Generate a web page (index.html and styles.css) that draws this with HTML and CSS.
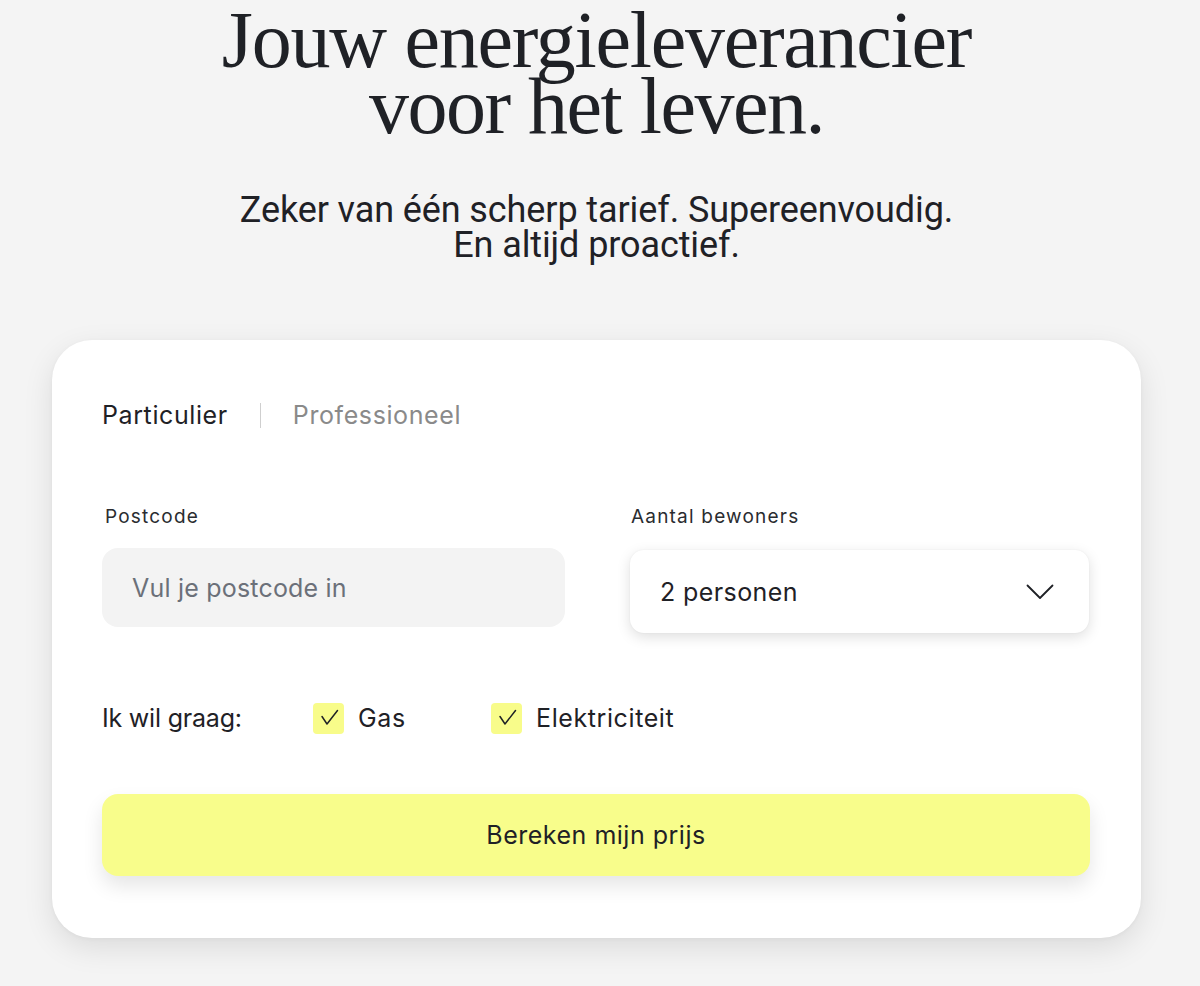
FILE: index.html
```html
<!DOCTYPE html>
<html lang="nl">
<head>
<meta charset="utf-8">
<title>Jouw energieleverancier voor het leven</title>
<link rel="stylesheet" href="styles.css">
</head>
<body>
<main class="page">
  <section class="hero">
    <h1 class="hero-title"><span class="l1">Jouw energieleverancier</span><br><span class="l2">voor het leven.</span></h1>
    <p class="hero-sub">Zeker van één scherp tarief. Supereenvoudig.<br>En altijd proactief.</p>
  </section>

  <section class="card">
    <div class="tabs">
      <span class="tab tab-active">Particulier</span>
      <span class="tab-sep"></span>
      <span class="tab">Professioneel</span>
    </div>

    <div class="fields">
      <div class="field">
        <label class="field-label">Postcode</label>
        <div class="input">Vul je postcode in</div>
      </div>
      <div class="field">
        <label class="field-label field-label-right">Aantal bewoners</label>
        <div class="select">
          <span>2 personen</span>
          <svg class="chevron" width="28" height="16" viewBox="0 0 28 16" fill="none"><path d="M1.5 1.5 L14 14 L26.5 1.5" stroke="#1f2126" stroke-width="1.8" stroke-linecap="round" stroke-linejoin="round"/></svg>
        </div>
      </div>
    </div>

    <div class="checks">
      <span class="checks-label">Ik wil graag:</span>
      <span class="check check-gas">
        <span class="box"><svg width="31" height="31" viewBox="0 0 31 31" fill="none"><path d="M9 13.5 L14 21 L24.5 7.5" stroke="#1f2126" stroke-width="1.5" stroke-linecap="round" stroke-linejoin="round"/></svg></span>
        <span class="check-text">Gas</span>
      </span>
      <span class="check">
        <span class="box"><svg width="31" height="31" viewBox="0 0 31 31" fill="none"><path d="M9 13.5 L14 21 L24.5 7.5" stroke="#1f2126" stroke-width="1.5" stroke-linecap="round" stroke-linejoin="round"/></svg></span>
        <span class="check-text">Elektriciteit</span>
      </span>
    </div>

    <button class="cta">Bereken mijn prijs</button>
  </section>
</main>
</body>
</html>
```

FILE: styles.css
```css
* { box-sizing: border-box; }
html, body { margin: 0; padding: 0; }
body {
  background: #f4f4f4;
  color: #1f2126;
  font-family: "Inter", "Liberation Sans", sans-serif;
  height: 986px;
  overflow: hidden;
}
.page {
  width: 1089px;
  margin-left: 52px;
  padding-top: 7px;
}
.hero { text-align: center; }
.hero-title {
  margin: 0;
  font-family: "Liberation Serif", serif;
  font-weight: 400;
  font-size: 80px;
  line-height: 66px;
  color: #1f2126;
}
.hero-title .l1 { letter-spacing: -1.25px; }
.hero-title .l2 { letter-spacing: -1.5px; }
.hero-sub {
  margin: 54px 0 0;
  font-family: "Roboto", "Liberation Sans", sans-serif;
  font-size: 36px;
  line-height: 35px;
  letter-spacing: -0.1px;
  color: #1f2126;
}
.card {
  margin-top: 77px;
  background: #fff;
  border-radius: 40px;
  box-shadow: 0 10px 30px rgba(0,0,0,0.10), 0 1px 4px rgba(0,0,0,0.04);
  padding: 60px 52px 62px 50px;
}
.tabs {
  display: flex;
  align-items: center;
  height: 30px;
}
.tab {
  font-size: 25px;
  line-height: 30px;
  color: #8a8a8a;
  letter-spacing: 0.6px;
}
.tab-active { color: #1f2126; }
.tab-sep {
  width: 1px;
  height: 25px;
  background: #cfcfcf;
  margin: 0 32px;
}
.fields {
  margin-top: 76px;
  display: grid;
  grid-template-columns: 463px 459px;
  column-gap: 65px;
}
.field { display: flex; flex-direction: column; }
.field-label {
  font-size: 19px;
  line-height: 22px;
  color: #2a2c30;
  padding-left: 3px;
  letter-spacing: 1.2px;
}
.field-label-right { padding-left: 1px; }
.input {
  margin-top: 20px;
  height: 79px;
  background: #f3f3f3;
  border-radius: 16px;
  padding-left: 30px;
  display: flex;
  align-items: center;
  font-size: 25px;
  letter-spacing: 0.2px;
  color: #6b7079;
}
.select {
  margin-top: 22px;
  height: 83px;
  background: #fff;
  border-radius: 14px;
  box-shadow: 0 4px 14px rgba(0,0,0,0.13), 0 0 2px rgba(0,0,0,0.06);
  padding: 0 35px 0 30px;
  display: flex;
  align-items: center;
  justify-content: space-between;
  font-size: 25px;
  letter-spacing: 0.4px;
  color: #1f2126;
}
.chevron { display: block; }
.checks {
  margin-top: 69px;
  display: flex;
  align-items: center;
  height: 32px;
  font-size: 25px;
  letter-spacing: 0.2px;
}
.checks-label { width: 211px; letter-spacing: -0.2px; }
.check {
  display: flex;
  align-items: center;
  gap: 14px;
}
.check-gas { width: 178px; }
.check-text { letter-spacing: 0.6px; }
.box {
  width: 31px;
  height: 31px;
  border-radius: 4px;
  background: #f8fc8a;
  display: block;
  flex: none;
}
.box svg { display: block; }
.cta {
  margin-top: 60px;
  display: block;
  width: 988px;
  height: 82px;
  border: 0;
  border-radius: 16px;
  background: #f8fd8b;
  box-shadow: 0 10px 20px rgba(0,0,0,0.10);
  font-family: "Inter", "Liberation Sans", sans-serif;
  font-size: 25px;
  color: #1f2126;
  letter-spacing: 0.5px;
}
```
